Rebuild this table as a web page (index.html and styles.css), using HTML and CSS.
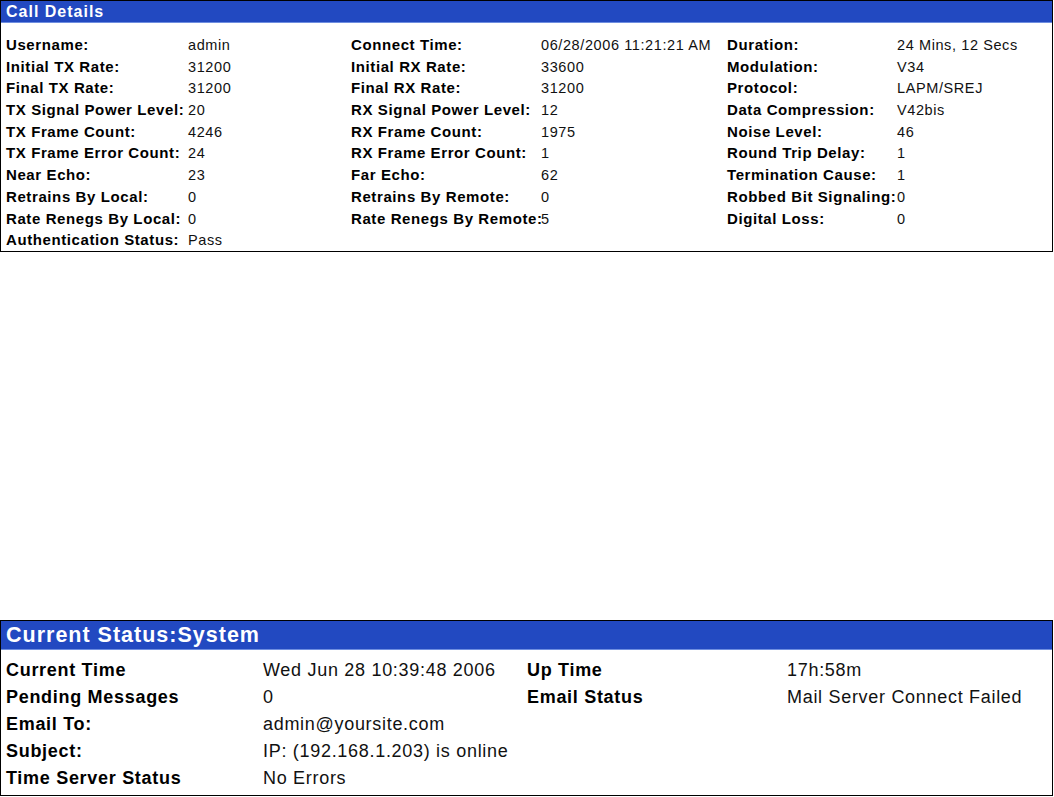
FILE: index.html
```html
<!DOCTYPE html>
<html>
<head>
<meta charset="utf-8">
<link rel="stylesheet" href="styles.css">
</head>
<body>
<div class="panel call">
  <div class="head">Call Details</div>
  <div class="grid grid-call">
    <div class="k">Username:</div><div class="v">admin</div>
    <div class="k">Connect Time:</div><div class="v">06/28/2006 11:21:21 AM</div>
    <div class="k">Duration:</div><div class="v">24 Mins, 12 Secs</div>

    <div class="k">Initial TX Rate:</div><div class="v">31200</div>
    <div class="k">Initial RX Rate:</div><div class="v">33600</div>
    <div class="k">Modulation:</div><div class="v">V34</div>

    <div class="k">Final TX Rate:</div><div class="v">31200</div>
    <div class="k">Final RX Rate:</div><div class="v">31200</div>
    <div class="k">Protocol:</div><div class="v">LAPM/SREJ</div>

    <div class="k">TX Signal Power Level:</div><div class="v">20</div>
    <div class="k">RX Signal Power Level:</div><div class="v">12</div>
    <div class="k">Data Compression:</div><div class="v">V42bis</div>

    <div class="k">TX Frame Count:</div><div class="v">4246</div>
    <div class="k">RX Frame Count:</div><div class="v">1975</div>
    <div class="k">Noise Level:</div><div class="v">46</div>

    <div class="k">TX Frame Error Count:</div><div class="v">24</div>
    <div class="k">RX Frame Error Count:</div><div class="v">1</div>
    <div class="k">Round Trip Delay:</div><div class="v">1</div>

    <div class="k">Near Echo:</div><div class="v">23</div>
    <div class="k">Far Echo:</div><div class="v">62</div>
    <div class="k">Termination Cause:</div><div class="v">1</div>

    <div class="k">Retrains By Local:</div><div class="v">0</div>
    <div class="k">Retrains By Remote:</div><div class="v">0</div>
    <div class="k">Robbed Bit Signaling:</div><div class="v">0</div>

    <div class="k">Rate Renegs By Local:</div><div class="v">0</div>
    <div class="k">Rate Renegs By Remote:</div><div class="v">5</div>
    <div class="k">Digital Loss:</div><div class="v">0</div>

    <div class="k">Authentication Status:</div><div class="v">Pass</div>
  </div>
</div>

<div class="panel status">
  <div class="head">Current Status:System</div>
  <div class="grid grid-status">
    <div class="k">Current Time</div><div class="v">Wed Jun 28 10:39:48 2006</div>
    <div class="k">Up Time</div><div class="v">17h:58m</div>

    <div class="k">Pending Messages</div><div class="v">0</div>
    <div class="k">Email Status</div><div class="v">Mail Server Connect Failed</div>

    <div class="k">Email To:</div><div class="v">admin@yoursite.com</div>
    <div class="k"></div><div class="v"></div>

    <div class="k">Subject:</div><div class="v">IP: (192.168.1.203) is online</div>
    <div class="k"></div><div class="v"></div>

    <div class="k">Time Server Status</div><div class="v">No Errors</div>
  </div>
</div>
</body>
</html>
```

FILE: styles.css
```css
html, body {
  margin: 0;
  padding: 0;
  background: #ffffff;
}
body {
  font-family: "Liberation Sans", Arial, sans-serif;
  color: #000000;
}
.panel {
  width: 1051px;
  border: 1px solid #000000;
  background: #ffffff;
}
.head {
  background: #2249c1;
  color: #ffffff;
  font-weight: bold;
  border-bottom: 1px solid #6f8ee0;
  padding-left: 5px;
  white-space: nowrap;
}
.grid {
  display: grid;
  align-items: baseline;
  padding-left: 5px;
  white-space: nowrap;
}
.k {
  font-weight: bold;
}
.v {
  color: #111111;
}

/* Call details */
.call .head {
  height: 21px;
  line-height: 22px;
  font-size: 16px;
  letter-spacing: 1px;
}
.grid-call {
  grid-template-columns: 182px 163px 190px 186px 170px 1fr;
  grid-auto-rows: 21.7px;
  padding-top: 11px;
  font-size: 14.5px;
  letter-spacing: 0.6px;
  line-height: 21.7px;
}
.grid-call .k {
  font-size: 15px;
}

/* Current status */
.status {
  margin-top: 368px;
}
.status .head {
  height: 28px;
  line-height: 29px;
  font-size: 21.5px;
  letter-spacing: 1px;
}
.grid-status {
  grid-template-columns: 257px 264px 260px 1fr;
  grid-auto-rows: 27px;
  padding-top: 7px;
  padding-bottom: 3px;
  font-size: 18px;
  letter-spacing: 0.7px;
  line-height: 27px;
}
```
